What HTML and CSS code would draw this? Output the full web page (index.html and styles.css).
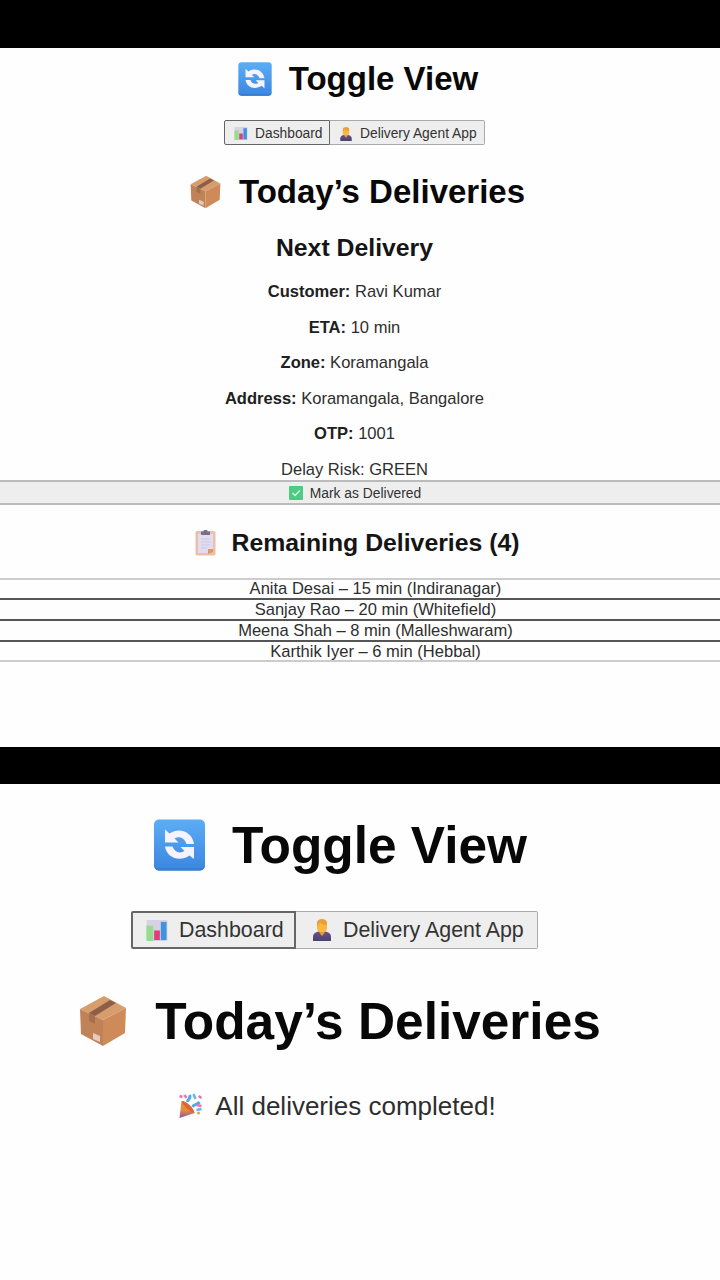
FILE: index.html
```html
<!DOCTYPE html>
<html lang="en">
<head>
<meta charset="utf-8">
<title>Toggle View</title>
<link rel="stylesheet" href="styles.css">
</head>
<body>
<svg class="defs" width="0" height="0" aria-hidden="true">
  <defs>
    <linearGradient id="blue" x1="0" y1="0" x2="0" y2="1"><stop offset="0" stop-color="#5cadf5"/><stop offset="1" stop-color="#3b86df"/></linearGradient>
    <linearGradient id="suit" x1="0" y1="0" x2="0" y2="1"><stop offset="0" stop-color="#6c4d88"/><stop offset="1" stop-color="#49436f"/></linearGradient>
    <linearGradient id="cone" x1="0" y1="0" x2="0" y2="1"><stop offset="0" stop-color="#f3823f"/><stop offset=".55" stop-color="#e0903c"/><stop offset="1" stop-color="#8d51a8"/></linearGradient>
    <symbol id="sync" viewBox="0 0 52 52">
      <rect x=".5" y=".5" width="51" height="51" rx="5" fill="url(#blue)"/>
      <path d="M1 46c0 4 2 5.500 5 5.500h40c3 0 5-1.500 5-5.500-1 3-3 3.500-5 3.500H6c-2 0-4-.500-5-3.500z" fill="#357bd0"/>
      <path d="M11.500 10.500V23.500H25L21 19.500C26 16.500 31 19 33 25H40.500C39 13 26 7.500 16 14.500z" fill="#f4f3ff"/>
      <path d="M40.500 40V28H27l4 4C26 35 21 33 19 27.500H11.500C13 38.500 26 43.500 36 36.500z" fill="#f4f3ff"/>
    </symbol>
    <symbol id="box" viewBox="0 0 48 52">
      <path d="M25 1 47 13 24 25 1 14z" fill="#d79d6c"/>
      <path d="M1 14 24 25v26L2 39z" fill="#c08358"/>
      <path d="M47 13 24 25v26l22-13z" fill="#ce8b59"/>
      <path d="M31 5 37 8 16 21 10 18z" fill="#8c6048"/>
      <path d="M10 18 16 21v8l-6-3z" fill="#a66f4d"/>
      <path d="M14 38l7 3v6l-7-3z" fill="#e8c9bd"/>
    </symbol>
    <symbol id="chart" viewBox="0 0 22 22">
      <rect width="22" height="22" rx="1" fill="#d8d1e3"/>
      <rect x="0" y="6" width="7" height="16" fill="#96dc8d"/>
      <rect x="8" y="11" width="6" height="10" fill="#df3e7d"/>
      <rect x="15" y="2" width="6" height="19" fill="#3e94df"/>
    </symbol>
    <symbol id="agent" viewBox="0 0 18 22">
      <path d="M0 22v-4c0-4 3-5 6-5.500h6c3 .5 6 1.500 6 5.500v4z" fill="url(#suit)"/>
      <path d="M6.500 10h5v4L9 17l-2.500-3z" fill="#e99a35"/>
      <rect x="4" y="1" width="10" height="12" rx="4" fill="#fbb83e"/>
      <path d="M4 7V4c0-3 3-4 5-4s5 1 5 4v2C10 6 8 5 7 3.500 6.500 5 5.500 6 4 7z" fill="#e9a03c"/>
    </symbol>
    <symbol id="check" viewBox="0 0 14 14">
      <rect width="14" height="14" rx="1" fill="#4dcb83"/>
      <path d="m3.500 7 2.500 2.500L10.800 4.500" fill="none" stroke="#d9f8e6" stroke-width="1.300"/>
    </symbol>
    <symbol id="clip" viewBox="0 0 21 26">
      <rect x=".5" y="1" width="20" height="24.500" rx="1.500" fill="#ebbfa9"/>
      <path d="M3 3.500h15V19l-4 4H3z" fill="#e2dcf0"/>
      <path d="M13 24v-5h5v3z" fill="#d99a62"/>
      <path d="M6 1.500h2.500a2 2 0 0 1 4 0H15V5H6z" fill="#77708a"/>
      <path d="M6 9h9M6 12h9M6 15h9M6 18h6" stroke="#cfc7df" stroke-width="1"/>
    </symbol>
    <symbol id="party" viewBox="0 0 24 26">
      <path d="M3 8c5 0 12 7 13 12L1 25z" fill="url(#cone)"/>
      <path d="M3 8c5 0 12 7 13 12-4 0-11-7-13-12z" fill="#df6535"/>
      <path d="M9 9c0-3 4-3 2-7M14 14c2-4 4-1 7-5" fill="none" stroke="#50a9e8" stroke-width="3"/>
      <path d="M15 1l2 5M18 17l5-1" stroke="#5cb9ee" stroke-width="2.500"/>
      <path d="M1 3l3 1M6 2l2 3M20 3l3 2M18 12l5 1" stroke="#e974b8" stroke-width="2.600"/>
      <circle cx="20" cy="20" r="1.500" fill="#f39a50"/>
    </symbol>
  </defs>
</svg>

<main class="page">
  <section class="view view-list">
    <h1 class="title"><svg class="icon sync"><use href="#sync"/></svg><span>Toggle View</span></h1>
    <nav class="tabs">
      <button class="tab tab-current"><svg class="icon chart"><use href="#chart"/></svg><span>Dashboard</span></button>
      <button class="tab"><svg class="icon agent"><use href="#agent"/></svg><span>Delivery Agent App</span></button>
    </nav>
    <h1 class="title today"><svg class="icon box"><use href="#box"/></svg><span>Today’s Deliveries</span></h1>
    <h2 class="next">Next Delivery</h2>
    <div class="details">
      <p><b>Customer:</b> Ravi Kumar</p>
      <p><b>ETA:</b> 10 min</p>
      <p><b>Zone:</b> Koramangala</p>
      <p><b>Address:</b> Koramangala, Bangalore</p>
      <p><b>OTP:</b> 1001</p>
      <p>Delay Risk: GREEN</p>
    </div>
    <button class="mark"><svg class="icon check"><use href="#check"/></svg><span>Mark as Delivered</span></button>
    <h2 class="remaining"><svg class="icon clip"><use href="#clip"/></svg><span>Remaining Deliveries (4)</span></h2>
    <ul class="queue">
      <li>Anita Desai – 15 min (Indiranagar)</li>
      <li>Sanjay Rao – 20 min (Whitefield)</li>
      <li>Meena Shah – 8 min (Malleshwaram)</li>
      <li>Karthik Iyer – 6 min (Hebbal)</li>
    </ul>
  </section>

  <section class="view view-done">
    <h1 class="title"><svg class="icon sync"><use href="#sync"/></svg><span>Toggle View</span></h1>
    <nav class="tabs">
      <button class="tab tab-current"><svg class="icon chart"><use href="#chart"/></svg><span>Dashboard</span></button>
      <button class="tab"><svg class="icon agent"><use href="#agent"/></svg><span>Delivery Agent App</span></button>
    </nav>
    <h1 class="title today"><svg class="icon box"><use href="#box"/></svg><span>Today’s Deliveries</span></h1>
    <p class="done"><svg class="icon party"><use href="#party"/></svg><span>All deliveries completed!</span></p>
  </section>
</main>
</body>
</html>
```

FILE: styles.css
```css
* { box-sizing: border-box; }
body { margin: 0; background: #000; color: #2e2e2e; font-family: "Liberation Sans", Arial, sans-serif; }
h1, h2, p, ul { margin: 0; padding: 0; }
ul { list-style: none; }
.defs { display: block; height: 0; }
.icon { flex: none; display: block; }
.page { display: flex; flex-direction: column; gap: 37px; width: 720px; height: 1280px; padding-top: 48px; overflow: hidden; }
.view { display: flex; flex-direction: column; background: #fefefe; white-space: nowrap; }
.view-list { height: 699px; font-size: 16.55px; }
.view-done { height: 496px; font-size: 26px; }

.title, .remaining, .next, .tabs, .mark, .done { display: flex; align-items: center; justify-content: center; flex: none; }
.title { color: #080808; font-weight: 700; }
.tab, .mark { font-family: inherit; color: #333; background: #eee; padding: 0; }
.tab { display: flex; align-items: center; border: 1px solid #aaa; border-left: 0; border-radius: 0 2px 2px 0; }
.tab-current { border: 1.5px solid #666; border-radius: 2px 0 0 2px; }

.view-list .title { height: 61px; padding-right: 4px; font-size: 33px; gap: 17px; }
.view-list .sync { width: 34px; height: 34px; }
.view-list .tabs { height: 25px; margin-top: 11px; padding-right: 11px; }
.view-list .tab { width: 155px; height: 25px; padding: 2px 0 0 10px; font-size: 13.8px; gap: 8px; }
.view-list .tab-current { width: 106px; padding-left: 9px; gap: 7px; }
.view-list .chart { width: 14px; height: 13px; }
.view-list .agent { width: 12px; height: 14px; }
.view-list .today { height: 92px; padding: 2px 5px 0 0; gap: 18px; }
.view-list .box { width: 31px; height: 34px; }

.next, .remaining { font-size: 24.8px; color: #151515; }
.next { height: 20px; padding: 2px 11px 0 0; }
.details { margin-top: 17px; padding-right: 11px; text-align: center; line-height: 35.6px; height: 206px; flex: none; }
.details b { color: #202020; }
.mark { width: 100%; height: 25px; padding-right: 10px; border: solid #bbb; border-width: 2px 0; font-size: 13.85px; gap: 7px; }
.check { width: 14px; height: 14px; }
.remaining { height: 73px; padding: 3px 5px 0 0; gap: 15px; }
.clip { width: 21px; height: 26px; }
.queue { border: solid #ccc; border-width: 2px 0; padding: 0; }
.queue li { height: 21px; padding-left: 31px; text-align: center; line-height: 19px; border-top: 2px solid #555; }
.queue li:first-child { height: 18px; line-height: 17px; border-top: 0; }
.queue li:last-child { height: 20px; }

.view-done .title { height: 122px; padding-right: 40px; font-size: 51.4px; gap: 26px; }
.view-done .sync { width: 53px; height: 52px; }
.view-done .tabs { height: 38px; margin-top: 5px; padding-right: 51px; }
.view-done .tab { width: 242px; height: 38px; padding-left: 17px; font-size: 21.4px; gap: 12px; }
.view-done .tab-current { width: 165px; padding-left: 13px; gap: 11px; border-width: 2px; }
.view-done .chart { width: 22px; height: 21px; }
.view-done .agent { width: 18px; height: 22px; }
.view-done .today { height: 144px; padding-right: 40px; gap: 28px; }
.view-done .box { width: 48px; height: 52px; }
.done { height: 24px; padding: 2px 46px 0 0; gap: 12px; }
.party { width: 25px; height: 26px; }
```
